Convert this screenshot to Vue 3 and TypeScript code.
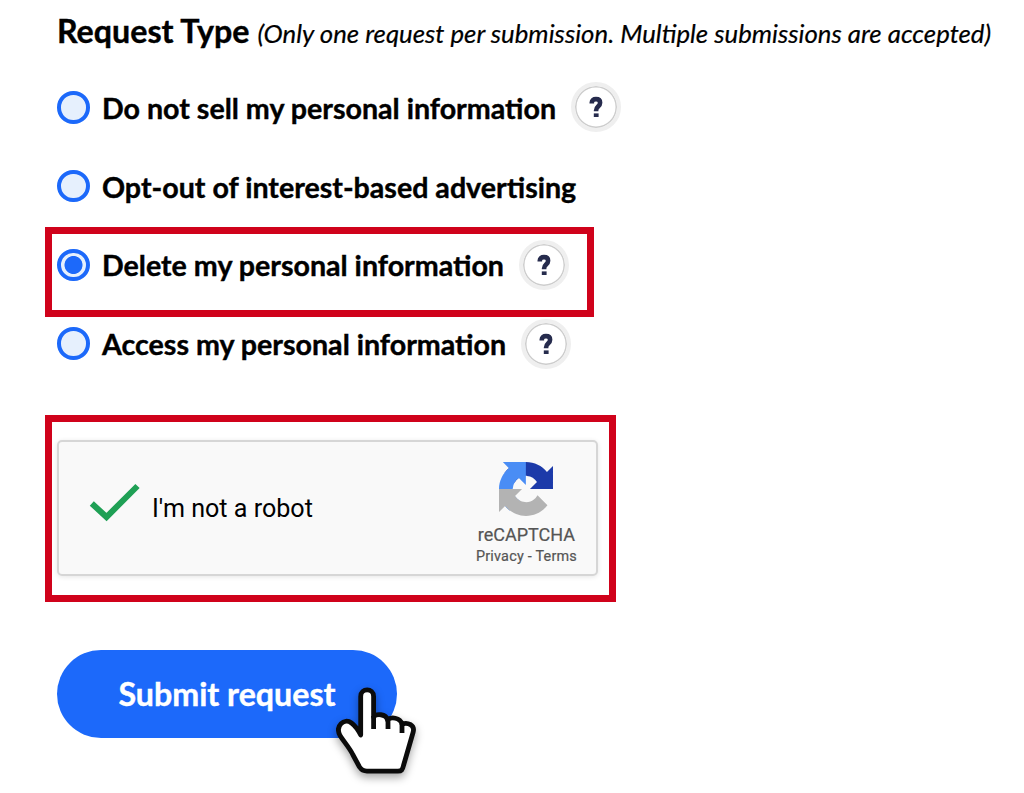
<script setup lang="ts">
import { ref } from "vue";

interface RequestOption {
  value: string;
  label: string;
  help: boolean;
}

const options: RequestOption[] = [
  { value: "no-sell", label: "Do not sell my personal information", help: true },
  { value: "opt-out", label: "Opt-out of interest-based advertising", help: false },
  { value: "delete", label: "Delete my personal information", help: true },
  { value: "access", label: "Access my personal information", help: true },
];

const selected = ref("delete");
const highlighted = "delete";
</script>

<template>
  <form class="request-form" @submit.prevent>
    <h2 class="heading">
      <span class="heading-title">Request Type</span>
      <em class="heading-note">(Only one request per submission. Multiple submissions are accepted)</em>
    </h2>

    <div class="options">
      <div v-for="option in options" :key="option.value" class="option">
        <label class="option-label">
          <input v-model="selected" type="radio" name="request" class="radio" :value="option.value">
          <span class="option-text">{{ option.label }}</span>
        </label>
        <button v-if="option.help" type="button" class="help">
          <svg viewBox="0 0 14 22" width="14" height="22">
            <path d="M2.8 7.6V6.6C2.8 4.2 4.4 3.1 7 3.1s4.1 1.2 4.1 3.6c0 4-4 3.700-4 7.700v.8" />
            <rect x="4.8" y="17.4" width="4.8" height="3.6" />
          </svg>
        </button>
        <div v-if="option.value === highlighted" class="option-frame" />
      </div>
    </div>

    <div class="captcha-frame">
      <div class="captcha">
        <svg class="check" viewBox="0 0 52 40" width="52" height="40">
          <path d="M2.8 20.5L17.5 34 48.5 3" />
        </svg>
        <span class="captcha-text">I'm not a robot</span>
        <div class="captcha-brand">
          <svg class="captcha-logo" viewBox="0 0 64 64" width="54" height="54">
            <path fill="#1c3aa9" d="M64 31.955l-.033-1.37V4.687l-7.16 7.16C50.948 4.674 42.033.093 32.05.093c-10.4 0-19.622 4.96-25.458 12.64l11.736 11.86a15.55 15.55 0 0 1 4.754-5.334c2.05-1.6 4.952-2.906 8.968-2.906.485 0 .86.057 1.135.163 4.976.393 9.288 3.14 11.828 7.124l-8.307 8.307L64 31.953" />
            <path fill="#4a8df5" d="M31.862.094l-1.37.033H4.594l7.16 7.16C4.58 13.147 0 22.06 0 32.046c0 10.4 4.96 19.622 12.64 25.458L24.5 45.768a15.55 15.55 0 0 1-5.334-4.754c-1.6-2.05-2.906-4.952-2.906-8.968 0-.485.057-.86.163-1.135.393-4.976 3.14-9.288 7.124-11.828l8.307 8.307L31.86.095" />
            <path fill="#b3b3b3" d="M.001 32.045l.033 1.37v25.898l7.16-7.16c5.86 7.173 14.774 11.754 24.76 11.754 10.4 0 19.622-4.96 25.458-12.64l-11.736-11.86a15.55 15.55 0 0 1-4.754 5.334c-2.05 1.6-4.952 2.906-8.968 2.906-.485 0-.86-.057-1.135-.163-4.976-.393-9.288-3.14-11.828-7.124l8.307-8.307c-10.522.04-22.4.066-27.295-.005" />
          </svg>
          <div class="captcha-name">reCAPTCHA</div>
          <div class="captcha-links">Privacy - Terms</div>
        </div>
      </div>
    </div>

    <div class="submit-row">
      <button type="submit" class="submit">Submit request</button>
      <svg class="pointer" viewBox="0 0 120 120" width="120" height="120">
        <path d="M40.7 65V26.5C40.7 17.8 53.6 17.8 53.6 26.500V47C56 43.5 66 43.5 67.5 50C71 46.5 80 47.5 82 54C88 52 95 55 93.2 62L83.5 95.5C82.5 100 81.5 101.1 78 101.1H47C43 101.1 41.5 100 39.5 97L33 85C29.5 77.5 24 72 20 65.5C15 56 24 47.5 31.5 53C35.5 56 38.5 60.5 40.7 65Z" />
        <path d="M53.6 46V59M68 49.5V59M82 53.5V63" />
      </svg>
    </div>
  </form>
</template>

<style>
body {
  margin: 0;
  background: #fff;
}
</style>

<style scoped>
.request-form {
  box-sizing: border-box;
  width: 1024px;
  height: 793px;
  padding: 11px 0 0 57px;
  overflow: hidden;
  background: #fff;
  color: #000;
  font-family: Lato, "Liberation Sans", sans-serif;
}

.heading {
  display: flex;
  align-items: baseline;
  gap: 8px;
  height: 40px;
  margin: 0;
  line-height: 40px;
  white-space: nowrap;
}

.heading-title {
  font-size: 32.2px;
  font-weight: 700;
  -webkit-text-stroke: 0.4px currentColor;
}

.heading-note {
  font-size: 25.78px;
  font-weight: 400;
  -webkit-text-stroke: 0.2px currentColor;
}

.options {
  display: grid;
  grid-template-rows: repeat(4, 78.7px);
  padding-top: 17.1px;
}

.option {
  position: relative;
  display: flex;
  align-items: center;
  gap: 15px;
}

.option-label {
  display: flex;
  align-items: center;
  gap: 12.5px;
}

.radio {
  box-sizing: border-box;
  width: 32.5px;
  height: 32.5px;
  margin: 0;
  border: 4px solid #1c69fa;
  border-radius: 50%;
  appearance: none;
  background: #e6f0fd;
}

.radio:checked {
  background: radial-gradient(circle, #1c69fa 8.6px, #e6f0fd 9.4px);
}

.option-text {
  padding-top: 1px;
  font-size: 28.62px;
  font-weight: 700;
  line-height: 36px;
  white-space: nowrap;
  -webkit-text-stroke: 0.4px currentColor;
}

.help {
  box-sizing: border-box;
  display: flex;
  align-items: center;
  justify-content: center;
  width: 50px;
  height: 50px;
  padding: 0;
  border: 4px solid #efefef;
  border-radius: 50%;
  background: #fff;
  box-shadow: inset 0 0 0 1.5px #cdcdcd;
}

.help path {
  fill: none;
  stroke: #262b4d;
  stroke-width: 4.6;
}

.help rect {
  fill: #262b4d;
}

.option-frame {
  position: absolute;
  top: 1.4px;
  left: -12px;
  box-sizing: border-box;
  width: 549.4px;
  height: 90px;
  border: 7px solid #d0021b;
  pointer-events: none;
}

.captcha-frame {
  box-sizing: border-box;
  width: 571px;
  height: 187px;
  margin: 31.9px 0 0 -12px;
  padding: 18px 11px 18px 5px;
  border: 7px solid #d0021b;
}

.captcha {
  box-sizing: border-box;
  display: flex;
  align-items: center;
  width: 541px;
  height: 136px;
  padding: 0 19px 0 30px;
  border: 2px solid #d6d6d6;
  border-radius: 5px;
  background: #f9f9f9;
  box-shadow: 0 1px 5px rgba(0, 0, 0, 0.1);
  font-family: Roboto, "Liberation Sans", sans-serif;
}

.check {
  margin-top: -9px;
}

.check path {
  fill: none;
  stroke: #1fa055;
  stroke-width: 6;
}

.captcha-text {
  margin-left: 11px;
  padding-top: 1px;
  font-size: 25.1px;
}

.captcha-brand {
  display: flex;
  flex-direction: column;
  align-items: center;
  padding-top: 13px;
  margin-left: auto;
  color: #555;
  white-space: nowrap;
}

.captcha-name {
  margin-top: 8px;
  font-size: 18px;
  line-height: 22px;
  -webkit-text-stroke: 0.2px currentColor;
}

.captcha-links {
  font-size: 14.4px;
  line-height: 21px;
  letter-spacing: 0.22px;
  -webkit-text-stroke: 0.2px currentColor;
}

.submit-row {
  position: relative;
  margin-top: 48px;
}

.submit {
  display: block;
  width: 340px;
  height: 88px;
  padding: 0;
  border: 0;
  border-radius: 44px;
  background: #1c69fa;
  color: #fff;
  font-family: inherit;
  font-size: 32.2px;
  font-weight: 700;
  -webkit-text-stroke: 0.4px currentColor;
}

.pointer {
  position: absolute;
  top: 20px;
  left: 263px;
  filter: drop-shadow(0 4px 4px rgba(0, 0, 0, 0.35));
}

.pointer path {
  fill: #fff;
  stroke: #0b0b0b;
  stroke-width: 4.8;
  stroke-linejoin: round;
}
</style>
